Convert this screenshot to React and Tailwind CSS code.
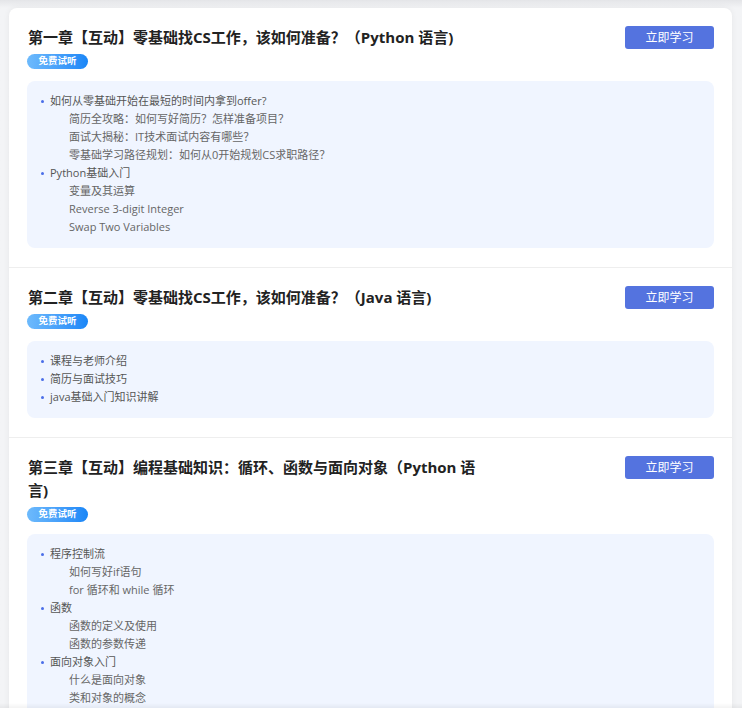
const chapters = [
  {
    title: "第一章【互动】零基础找CS工作，该如何准备？（Python 语言)",
    items: [
      {
        text: "如何从零基础开始在最短的时间内拿到offer?",
        children: [
          "简历全攻略：如何写好简历？怎样准备项目？",
          "面试大揭秘：IT技术面试内容有哪些？",
          "零基础学习路径规划：如何从0开始规划CS求职路径？",
        ],
      },
      {
        text: "Python基础入门",
        children: ["变量及其运算", "Reverse 3-digit Integer", "Swap Two Variables"],
      },
    ],
  },
  {
    title: "第二章【互动】零基础找CS工作，该如何准备？（Java 语言)",
    items: [
      { text: "课程与老师介绍", children: [] },
      { text: "简历与面试技巧", children: [] },
      { text: "java基础入门知识讲解", children: [] },
    ],
  },
  {
    title: "第三章【互动】编程基础知识：循环、函数与面向对象（Python 语言)",
    items: [
      { text: "程序控制流", children: ["如何写好if语句", "for 循环和 while 循环"] },
      { text: "函数", children: ["函数的定义及使用", "函数的参数传递"] },
      { text: "面向对象入门", children: ["什么是面向对象", "类和对象的概念"] },
    ],
  },
];

function Outline({ items }) {
  return (
    <ul className="mt-[12px] rounded-lg bg-[#f0f5ff] pl-[14px] pr-[12px] pt-[11px] pb-[12px] text-[11px] leading-[18px] text-[#555]">
      {items.map((item) => (
        <li key={item.text}>
          <div className="flex items-center">
            <span className="mr-[6px] h-[3px] w-[3px] rounded-full bg-[#4a6ee8]" />
            <span>{item.text}</span>
          </div>
          {item.children.map((c) => (
            <div key={c} className="pl-[28px] text-[#666]">
              {c}
            </div>
          ))}
        </li>
      ))}
    </ul>
  );
}

function Chapter({ chapter }) {
  return (
    <section className="border-b border-[#eeeeee] px-[18px] pt-[18px] pb-[19px]">
      <div className="flex items-start justify-between">
        <div>
          <h2 className="w-[468px] pl-px text-[15px] font-bold leading-[23px] text-[#222] [text-spacing-trim:space-all]">
            {chapter.title}
          </h2>
          <span className="mt-[5px] flex h-[15px] w-[61px] items-center justify-center rounded-full bg-gradient-to-r from-[#6dbafc] to-[#1886f7] text-[9.5px] font-bold text-white">
            免费试听
          </span>
        </div>
        <button className="h-[23px] w-[89px] rounded-[3px] bg-[#5473df] text-[12px] text-white">
          立即学习
        </button>
      </div>
      <Outline items={chapter.items} />
    </section>
  );
}

export default function App() {
  return (
    <div className="min-h-screen bg-gradient-to-b from-[#e4e5e8] via-[#f3f4f6] via-[8px] to-[#f3f4f6] pl-[9px] pr-[10px] pt-[8px] font-['Open_Sans','Noto_Sans_CJK_SC',sans-serif]">
      <div className="rounded-t-lg bg-white shadow-[0_0_6px_rgba(0,0,0,0.06)]">
        {chapters.map((ch) => (
          <Chapter key={ch.title} chapter={ch} />
        ))}
      </div>
      {/* bottom bar shadow peeking in */}
      <div className="fixed inset-x-0 bottom-0 h-[5px] bg-gradient-to-b from-transparent to-black/5" />
    </div>
  );
}
